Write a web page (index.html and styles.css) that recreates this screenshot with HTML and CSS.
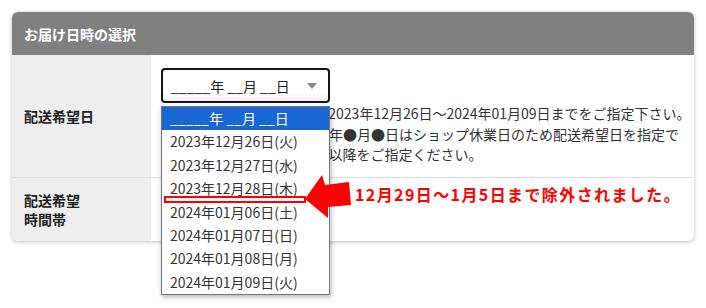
FILE: index.html
```html
<!DOCTYPE html>
<html lang="ja">
<head>
  <meta charset="UTF-8">
  <title>お届け日時の選択</title>
  <link rel="stylesheet" href="styles.css">
</head>
<body>
  <div class="card">
    <div class="card-head">お届け日時の選択</div>

    <div class="row row-date">
      <div class="label">配送希望日</div>
      <div class="field">
        <div class="select-box">
          <span>_____年 __月 __日</span>
          <span class="caret"></span>
        </div>
        <p class="note">配送希望日につきましては2023年12月26日～2024年01月09日までをご指定下さい。<br>年末の●月●日～●●●●年●月●日はショップ休業日のため配送希望日を指定で<br>きません。翌年の●月●日以降をご指定ください。</p>
      </div>
    </div>

    <div class="row row-time">
      <div class="label">配送希望<br>時間帯</div>
      <div class="field">
        <div class="select-box">
          <span>指定なし</span>
          <span class="caret"></span>
        </div>
      </div>
    </div>

    <!-- open dropdown of the date select -->
    <ul class="options">
      <li class="active">_____年 __月 __日</li>
      <li>2023年12月26日(火)</li>
      <li>2023年12月27日(水)</li>
      <li>2023年12月28日(木)</li>
      <li>2024年01月06日(土)</li>
      <li>2024年01月07日(日)</li>
      <li>2024年01月08日(月)</li>
      <li>2024年01月09日(火)</li>
    </ul>

    <!-- annotation -->
    <div class="cut-mark"></div>
    <svg class="arrow" width="55" height="52" viewBox="0 0 55 52">
      <polygon points="5,29 22,5 25,15 49,12 51,35 28,37 28,48" fill="#ff0000"/>
    </svg>
    <div class="callout">12月29日～1月5日まで除外されました。</div>
  </div>
</body>
</html>
```

FILE: styles.css
```css
html {
  height: 100%;
}

body {
  box-sizing: border-box;
  min-height: 100%;
  margin: 0;
  padding: 12px;
  background: #fff;
  font-family: "Noto Sans CJK JP", "Noto Sans", sans-serif;
  font-size: 14px;
  color: #333;
}

.card {
  position: relative;
  width: 682px;
  border-radius: 6px;
  background: #fff;
  box-shadow: 0 1px 4px rgba(0, 0, 0, 0.25);
}

.card-head {
  display: flex;
  align-items: center;
  height: 43px;
  padding: 0 12px;
  background: #808080;
  color: #fff;
  font-weight: bold;
  border-radius: 6px 6px 0 0;
}

.row {
  display: grid;
  grid-template-columns: 139px 1fr;
}

.row-time {
  border-top: 1px solid #dddddd;
}

.row-time .label {
  border-radius: 0 0 0 6px;
}

.label {
  display: flex;
  align-items: center;
  padding: 0 12px;
  background: #eeeeee;
  color: #222;
  font-weight: bold;
  line-height: 19px;
}

.field {
  padding: 13px 10px 12.5px;
}

.row-time .field {
  padding: 14px 10px;
}

.select-box {
  box-sizing: border-box;
  display: flex;
  align-items: center;
  justify-content: space-between;
  width: 169px;
  height: 35px;
  padding: 0 11px 0 8px;
  border: 2px solid #151515;
  border-radius: 4px;
  background: linear-gradient(#fff 70%, #f1f1f1);
  color: #222;
}

.caret {
  width: 0;
  height: 0;
  border-left: 5px solid transparent;
  border-right: 5px solid transparent;
  border-top: 6px solid #888;
}

.note {
  margin: 0;
  line-height: 20.5px;
  white-space: nowrap;
  color: #333;
}

.options {
  position: absolute;
  left: 149px;
  top: 94px;
  box-sizing: border-box;
  width: 169px;
  margin: 0;
  padding: 0;
  list-style: none;
  background: #fff;
  border: 1px solid #777;
  box-shadow: 1px 2px 5px rgba(0, 0, 0, 0.3);
}

.options li {
  height: 23.4px;
  line-height: 23.4px;
  padding-left: 8px;
  color: #333;
  white-space: nowrap;
}

.options li.active {
  background: #1967d2;
  color: #fff;
}

.cut-mark {
  position: absolute;
  left: 152px;
  top: 184px;
  box-sizing: border-box;
  width: 142px;
  height: 7px;
  border: 2px solid #ff0000;
  background: #fff;
}

.arrow {
  position: absolute;
  left: 288px;
  top: 158px;
}

.callout {
  position: absolute;
  left: 343px;
  top: 172px;
  font-size: 16px;
  line-height: 20px;
  font-weight: bold;
  letter-spacing: 1.4px;
  color: #ff0000;
  white-space: nowrap;
}
```
